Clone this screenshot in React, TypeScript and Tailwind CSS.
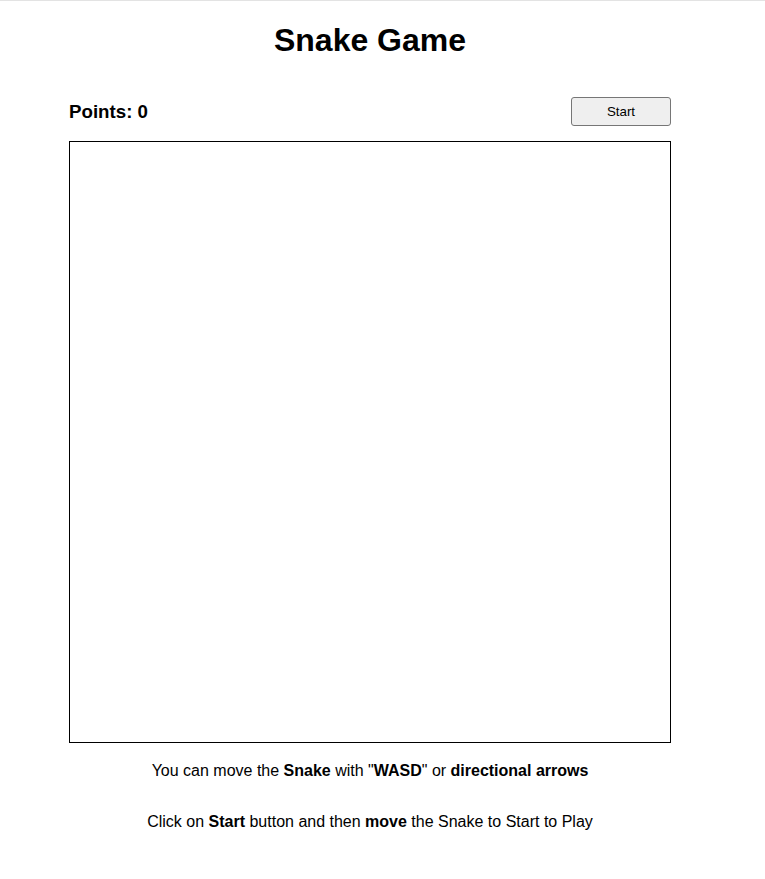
import React from "react";

export default function App() {
  return (
    <div className="min-h-[879px] bg-white border-t border-[#e3e3e3] text-black" style={{ fontFamily: '"Liberation Sans", Arial, sans-serif' }}>
      <div className="w-[740px] flex flex-col items-center">
        <h1 className="text-[32px] leading-[37px] font-bold mt-[21px]">Snake Game</h1>
        <div className="w-[602px] flex items-center justify-between mt-[38px]">
          <h3 className="text-[18.72px] leading-[22px] font-bold">Points: 0</h3>
          <button className="w-[100px] h-[29px] bg-[#efefef] border border-[#767676] rounded-[3px] text-[13.33px] leading-[15px]">
            Start
          </button>
        </div>
        <div className="w-[602px] h-[602px] border border-black mt-[15px]" />
        <p className="text-[16px] leading-[18px] mt-[19px]">
          You can move the <b>Snake</b> with "<b>WASD</b>" or <b>directional arrows</b>
        </p>
        <p className="text-[16px] leading-[18px] mt-[33px]">
          Click on <b>Start</b> button and then <b>move</b> the Snake to Start to Play
        </p>
      </div>
    </div>
  );
}
